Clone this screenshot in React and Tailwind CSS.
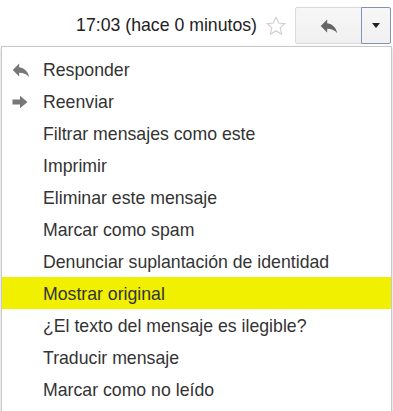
import React from "react";

const items = [
  { label: "Responder", icon: "reply" },
  { label: "Reenviar", icon: "forward" },
  { label: "Filtrar mensajes como este" },
  { label: "Imprimir" },
  { label: "Eliminar este mensaje" },
  { label: "Marcar como spam" },
  { label: "Denunciar suplantación de identidad" },
  { label: "Mostrar original", active: true },
  { label: "¿El texto del mensaje es ilegible?" },
  { label: "Traducir mensaje" },
  { label: "Marcar como no leído" },
];

const ReplyIcon = ({ className }) => (
  <svg viewBox="0 0 24 24" className={className} fill="currentColor">
    <path d="M10 9V5l-7 7 7 7v-4.1c5 0 8.5 1.6 11 5.1-1-5-4-10-11-11z" />
  </svg>
);

const ForwardIcon = ({ className }) => (
  <svg viewBox="0 0 24 24" className={className} fill="currentColor">
    <path d="M3 9h9V4.5l9 7.5-9 7.5V15H3z" />
  </svg>
);

const StarIcon = () => (
  <svg viewBox="0 0 24 24" className="w-[22px] h-[22px]" fill="none" stroke="#d0d0d0" strokeWidth="1.2">
    <path d="M12 2.5l2.9 6.3 6.8.7-5.1 4.6 1.5 6.7L12 17.4l-6.1 3.4 1.5-6.7-5.1-4.6 6.8-.7z" />
  </svg>
);

const App = () => {
  return (
    <div
      className="w-[393px] h-[411px] bg-white overflow-hidden"
      style={{ fontFamily: '"Liberation Sans", Arial, sans-serif' }}
    >
      <div className="flex items-center justify-end pt-[7px] pr-[2px]">
        <div className="text-[17.7px] text-[#222] mr-[8px]">17:03 (hace 0 minutos)</div>
        <div className="mr-[8px] flex items-center">
          <StarIcon />
        </div>
        <div className="flex h-[37px]">
          <div className="w-[67px] flex items-center justify-center border border-[#d9d9d9] rounded-l-[2px] bg-gradient-to-b from-[#f7f7f7] to-[#f0f0f0]">
            <ReplyIcon className="w-[22px] h-[22px] text-[#666]" />
          </div>
          <div className="w-[30px] flex items-center justify-center border border-[#7d95b8] -ml-[1px] rounded-r-[2px] bg-gradient-to-b from-[#f7f7f7] to-[#f0f0f0]">
            <div className="w-0 h-0 border-l-[4px] border-r-[4px] border-t-[5px] border-l-transparent border-r-transparent border-t-[#222]" />
          </div>
        </div>
      </div>
      <div className="ml-[1px] w-[391px] mt-[2px] border border-[#c8c8c8] pt-[6px] pb-4 shadow-[0_2px_4px_rgba(0,0,0,0.2)]">
        {items.map((item, index) => (
          <div
            key={index}
            className={`flex items-center h-[32px] text-[17.7px] text-[#333] ${item.active ? "bg-[#f0f000]" : ""}`}
          >
            <div className="w-[41px] pl-[8px] flex items-center mt-[2px]">
              {item.icon === "reply" && <ReplyIcon className="w-[22px] h-[22px] text-[#777]" />}
              {item.icon === "forward" && <ForwardIcon className="w-[20px] h-[20px] text-[#777]" />}
            </div>
            <div className="mt-[2px]">{item.label}</div>
          </div>
        ))}
      </div>
    </div>
  );
};

export default App;
